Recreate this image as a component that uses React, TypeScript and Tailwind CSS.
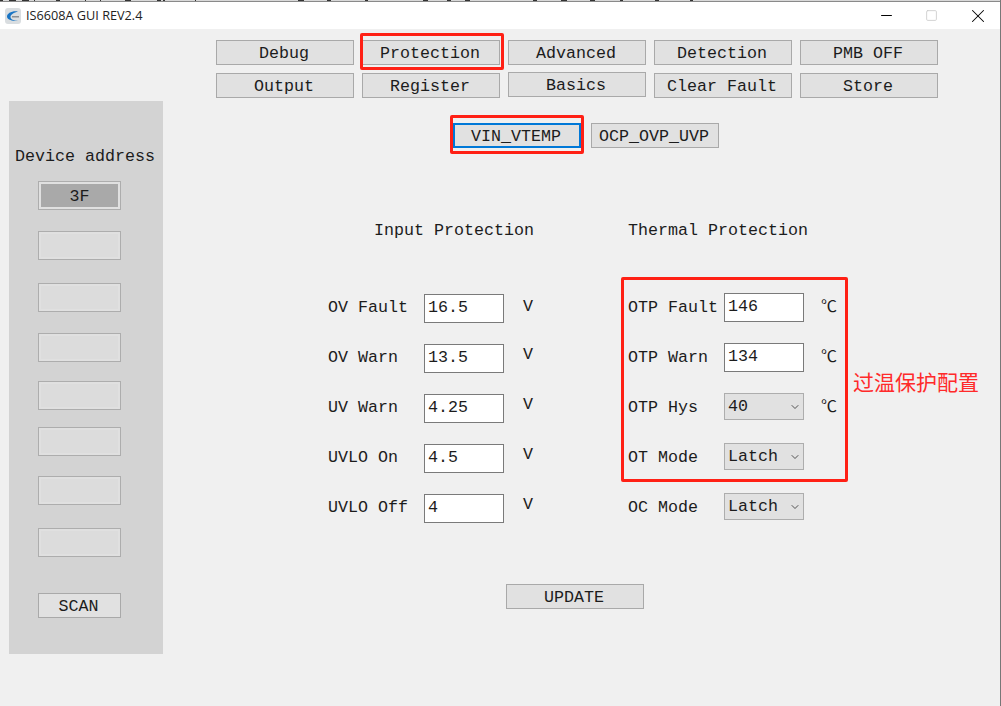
import { ChevronDown, Minus, Square, X } from "lucide-react";

const MONO = "font-['Liberation_Mono','Noto_Sans_CJK_SC',monospace] text-[16.67px] text-[#1c1c1c]";

const NAV = ["Debug", "Protection", "Advanced", "Detection", "PMB OFF", "Output", "Register", "Basics", "Clear Fault", "Store"];

const SLOTS = [
  { label: "3F", gap: "mt-[14px]", active: true },
  { label: "", gap: "mt-[21px]", active: false },
  { label: "", gap: "mt-[23px]", active: false },
  { label: "", gap: "mt-[21px]", active: false },
  { label: "", gap: "mt-[19px]", active: false },
  { label: "", gap: "mt-[17px]", active: false },
  { label: "", gap: "mt-[20px]", active: false },
  { label: "", gap: "mt-[23px]", active: false },
];

const INPUT_ROWS = [
  { label: "OV Fault", value: "16.5", unit: "leading-[26px]" },
  { label: "OV Warn", value: "13.5", unit: "leading-[21px]" },
  { label: "UV Warn", value: "4.25", unit: "leading-[21px]" },
  { label: "UVLO On", value: "4.5", unit: "leading-[21px]" },
  { label: "UVLO Off", value: "4", unit: "leading-[21px]" },
];

function Button({ label, className = "" }: { label: string; className?: string }) {
  return (
    <button className={`h-[25px] w-[138px] border border-[#a9a9a9] bg-[#e1e1e1] pr-[2px] pt-[3px] leading-none ${MONO} ${className}`}>
      {label}
    </button>
  );
}

function Slot({ label, active, className }: { label: string; active: boolean; className: string }) {
  return (
    <div className={`h-[29px] w-[83px] shrink-0 border border-[#adadad] bg-[#e0e0e0] p-[2px] ${className}`}>
      <div className={`flex h-full items-center justify-center pt-[2px] ${active ? "bg-[#a9a9a9]" : "bg-[#dcdcdc]"} ${MONO}`}>
        {label}
      </div>
    </div>
  );
}

function Field({ value }: { value: string }) {
  return (
    <input
      readOnly
      value={value}
      className={`h-[29px] w-[80px] border border-[#7a7a7a] bg-white pb-[3px] pl-[3px] outline-none ${MONO}`}
    />
  );
}

function Dropdown({ value }: { value: string }) {
  return (
    <div className="relative h-[27px] w-[80px]">
      <select
        value={value}
        onChange={() => {}}
        className={`h-full w-full appearance-none border border-[#adadad] bg-[#e1e1e1] pl-[3px] outline-none ${MONO}`}
      >
        <option>{value}</option>
      </select>
      <ChevronDown size={12} strokeWidth={1.5} className="pointer-events-none absolute right-[3px] top-[8px] text-[#222]" />
    </div>
  );
}

function Celsius() {
  return <span className="ml-[17px] font-['Noto_Sans_CJK_SC',serif] text-[16px] leading-[25px] text-[#1c1c1c]">℃</span>;
}

function ThermalRow({ label, children }: { label: string; children: React.ReactNode }) {
  return (
    <div className="flex h-[50px] items-start">
      <span className={`h-[27px] w-[96px] whitespace-pre leading-[29px] ${MONO}`}>{label}</span>
      {children}
    </div>
  );
}

function AppIcon() {
  return (
    <svg width="16" height="16" viewBox="0 0 16 16" className="ml-[5px] shrink-0">
      <rect width="16" height="16" rx="3" fill="#d9dde0" />
      <path d="M13 3.5C7 2.5 2 5.5 2 8.5c0 3 5 5 11 4-4 .2-7.5-1.2-7.5-3.6C5.500 6.500 9 4.500 13 3.500Z" fill="#1874c4" />
      <path d="M7 8h7v1.500H7z" fill="#8a8f94" />
    </svg>
  );
}

function DesktopEdge() {
  return (
    <svg width="1001" height="2" className="block shrink-0">
      <rect width="1001" height="2" fill="#d8d8d8" />
      <rect y="1" width="1001" height="1" fill="#8a8a8a" />
      <path d="M0 0h3M9 0h7M22 0h7M34 0h1M56 0h4M85 0h1M100 0h1M125 0h6M157 0h4M163 0h2M195 0h1M298 0h6M327 0h4M365 0h3M423 0h5M447 0h4M465 0h5M533 0h4M561 0h6M590 0h5M620 0h3M655 0h4M690 0h3" stroke="#333" strokeWidth="2" />
    </svg>
  );
}

export default function App() {
  return (
    <div className="relative flex h-[706px] w-[1001px] flex-col overflow-hidden border-r border-[#777] bg-[#f0f0f0]">
      <DesktopEdge />
      <div className="flex h-[27px] shrink-0 items-center bg-white">
        <AppIcon />
        <span className="ml-[5px] font-['Open_Sans',sans-serif] text-[12.7px] text-[#222]">IS6608A GUI REV2.4</span>
        <div className="ml-auto flex items-center">
          <Minus size={17} strokeWidth={1.4} className="mr-[30px] text-black" />
          <Square size={13} strokeWidth={1.6} className="mr-[29px] text-[#ccc]" />
          <X size={22} strokeWidth={1.1} className="mr-[11px] text-black" />
        </div>
      </div>

      <div className="flex flex-1">
        <aside className="ml-[9px] mt-[72px] flex h-[553px] w-[154px] shrink-0 flex-col items-start bg-[#d3d3d3] pl-[29px] pt-[46px]">
          <span className={`-ml-[23px] whitespace-pre leading-[20px] ${MONO}`}>Device address</span>
          {SLOTS.map((s, i) => (
            <Slot key={i} label={s.label} active={s.active} className={s.gap} />
          ))}
          <Button label="SCAN" className="mt-[36px] w-[83px]! shrink-0" />
        </aside>

        <main className="ml-[53px] flex-1 pt-[11px]">
          <div className="grid w-[722px] grid-cols-5 gap-x-[8px] gap-y-[8px]">
            {NAV.map((n) => (
              <Button key={n} label={n} className={n === "Basics" ? "-mt-px" : ""} />
            ))}
          </div>

          <div className="ml-[237px] mt-[25px] flex items-center gap-[10px]">
            <Button label="VIN_VTEMP" className="w-[128px]! border-2! border-[#0078d7]!" />
            <Button label="OCP_OVP_UVP" className="w-[128px]!" />
          </div>

          <div className="ml-[112px] mt-[72px] flex">
            <div className="w-[300px]">
              <p className={`pl-[46px] leading-[22px] ${MONO}`}>Input Protection</p>
              <div className="mt-[52px]">
                {INPUT_ROWS.map((r) => (
                  <div key={r.label} className="flex h-[50px] items-start">
                    <span className={`h-[26px] w-[96px] whitespace-pre leading-[28px] ${MONO}`}>{r.label}</span>
                    <Field value={r.value} />
                    <span className={`ml-[19px] ${MONO} ${r.unit}`}>V</span>
                  </div>
                ))}
              </div>
            </div>

            <div>
              <p className={`leading-[22px] ${MONO}`}>Thermal Protection</p>
              <div className="mt-[51px]">
                <ThermalRow label="OTP Fault">
                  <Field value="146" />
                  <Celsius />
                </ThermalRow>
                <ThermalRow label="OTP Warn">
                  <Field value="134" />
                  <Celsius />
                </ThermalRow>
                <ThermalRow label="OTP Hys">
                  <Dropdown value="40" />
                  <Celsius />
                </ThermalRow>
                <ThermalRow label="OT Mode">
                  <Dropdown value="Latch" />
                </ThermalRow>
                <ThermalRow label="OC Mode">
                  <Dropdown value="Latch" />
                </ThermalRow>
              </div>
            </div>
          </div>

          <Button label="UPDATE" className="ml-[290px] mt-[40px]" />
        </main>
      </div>

      {/* red annotation marks drawn over the screenshot */}
      <div className="pointer-events-none absolute left-[360px] top-[33px] h-[37px] w-[144px] rounded-[2px] border-[3px] border-[#ff2015]" />
      <div className="pointer-events-none absolute left-[450px] top-[115px] h-[39px] w-[134px] rounded-[2px] border-[3px] border-[#ff2015]" />
      <div className="pointer-events-none absolute left-[621px] top-[277px] h-[205px] w-[227px] rounded-[2px] border-[3px] border-[#ff2015]" />
      <span className="absolute left-[853px] top-[367px] font-['Noto_Sans_CJK_SC',sans-serif] text-[21px] leading-[28px] text-[#ff2a2a]">
        过温保护配置
      </span>
    </div>
  );
}
